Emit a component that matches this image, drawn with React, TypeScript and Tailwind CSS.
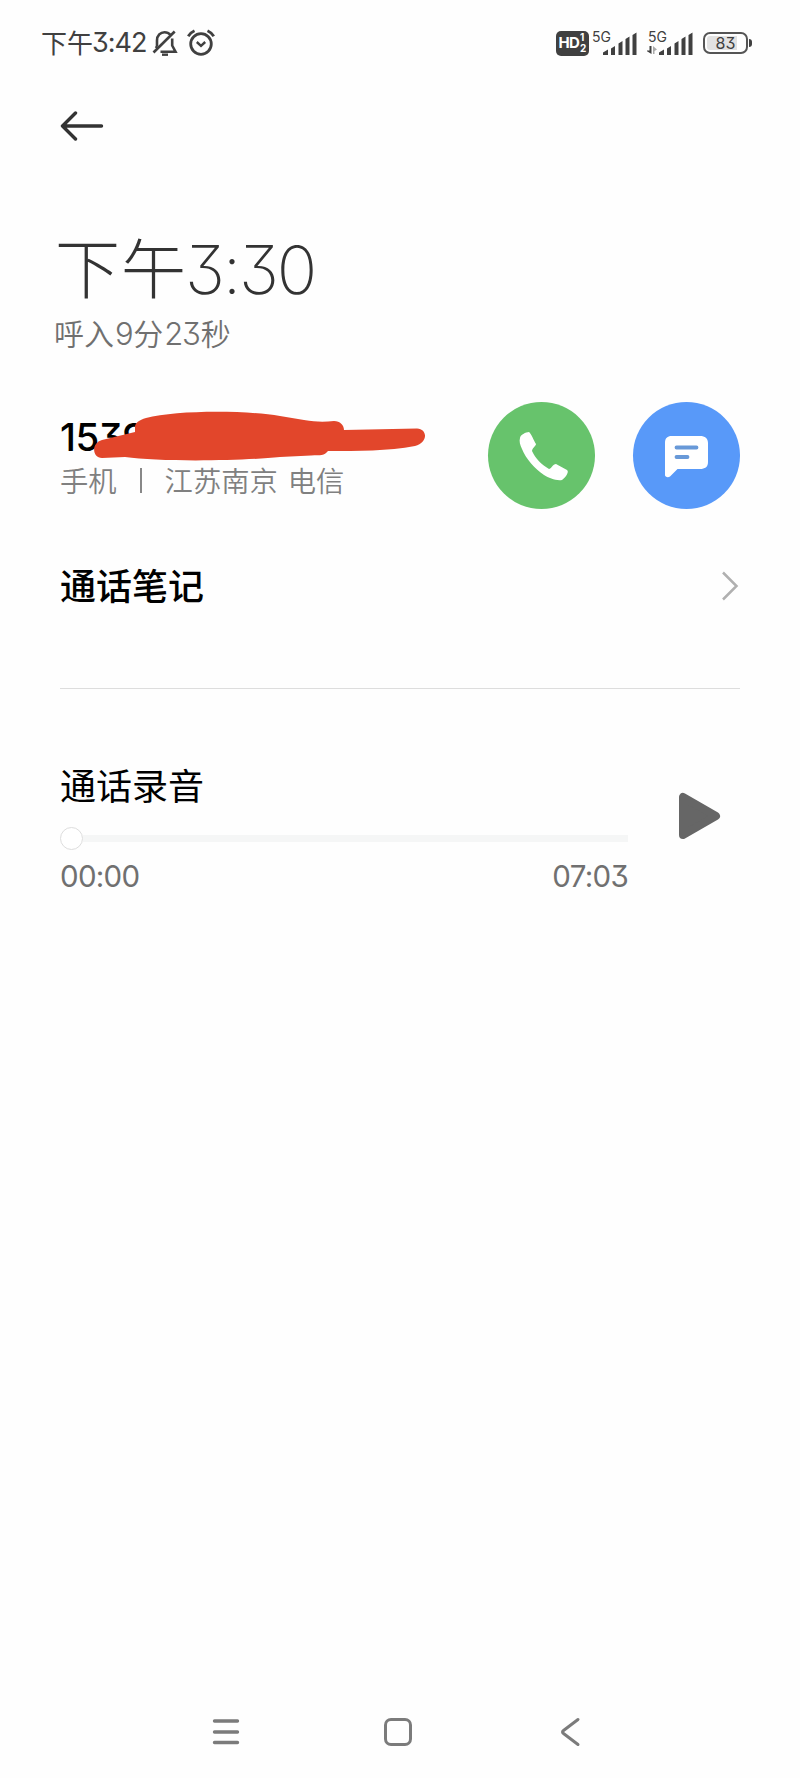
import React from 'react';

const StatusBar = () => {
  return (
    <div className="flex h-[84px] items-center justify-between pl-[41px] pr-[48px] pt-[2px] text-[#404040]">
      <div className="flex items-center">
        <span className="flex items-center whitespace-nowrap text-[26px] leading-[30px]">
          <span className="-mt-[3px]">下午</span>
          <span className="num ml-[-1px] text-[27px] tracking-[-1px]">3:42</span>
        </span>
        <svg className="ml-[6px] h-[28px] w-[26px]" viewBox="0 0 26 28" fill="none" stroke="currentColor" strokeWidth="2.6">
          <path d="M5 17V11.500C5 6.500 8.500 3.200 12.500 3.200C15 3.200 17 4.200 18.300 5.800M20.200 9.500V16.500L23.500 22.700H8.500M5 17L4 19" />
          <path d="M22.700 2.500L1.500 23.500" />
          <path d="M10 25.700H16" strokeWidth="2.400" />
        </svg>
        <svg className="ml-[9px] h-[28px] w-[28px]" viewBox="0 0 28 28" fill="none" stroke="currentColor" strokeWidth="2.8">
          <circle cx="14" cy="15" r="10.300" />
          <path d="M9.800 13L14 16.800L18.200 13" strokeWidth="2.400" />
          <path d="M1.200 7.200C2.800 4.600 4.800 2.900 7.500 1.700M26.800 7.200C25.200 4.600 23.200 2.900 20.500 1.700" />
        </svg>
      </div>

      <div className="flex items-center">
        <div className="flex h-[25px] w-[33px] items-center justify-center gap-[1px] rounded-[5px] bg-[#404040] text-white">
          <span className="num text-[15px] font-bold tracking-[-0.8px]">HD</span>
          <span className="num flex flex-col text-[10px] font-bold leading-[11px]">
            <span>1</span>
            <span>2</span>
          </span>
        </div>
        <Signal />
        <div className="w-[8px]" />
        <Signal data />
        <div className="ml-[10px] flex items-center">
          <div className="flex h-[22px] w-[45px] items-center justify-center rounded-[7px] border-2 border-[#555555] p-[2px]">
            <div className="flex h-full w-full items-center rounded-[3px] bg-gradient-to-r from-[#e2e2e2] from-80% to-white to-80%">
              <span className="num w-full text-center text-[16px] font-normal leading-none">83</span>
            </div>
          </div>
          <div className="ml-[1px] h-[8px] w-[3px] rounded-r-sm bg-[#404040]" />
        </div>
      </div>
    </div>
  );
};

const Signal = ({ data = false }: { data?: boolean }) => {
  return (
    <div className="relative ml-[2px] h-[26px] w-[46px]">
      <span className="num absolute left-[1px] top-0 text-[14px] leading-none">5G</span>
      <svg className="h-full w-full" viewBox="0 0 46 26" fill="currentColor">
        <path d="M12 25V22.500L17 19.500V25ZM20 25V18.500L24 16V25ZM27.500 25V13.500L31.500 11V25ZM34.500 25V9L38.500 6.500V25ZM41.500 25V5L45.500 2.500V25Z" />
        {data && (
          <>
            <path d="M2.500 16H4.500V24L-1 20.500H2.500Z" />
            <path d="M6 24H7.500V21L10 19.500L6 16Z" fill="#aaaaaa" />
          </>
        )}
      </svg>
    </div>
  );
};

const CallHeader = () => {
  return (
    <header>
      <div className="flex h-[84px] items-center pl-[60px]">
        <svg className="h-[30px] w-[44px]" viewBox="0 0 44 30" fill="none" stroke="#333333" strokeWidth="3.4" strokeLinecap="round" strokeLinejoin="round">
          <path d="M15.500 2L2.500 15L15.500 28M2.500 15H41.500" />
        </svg>
      </div>
      <h1 className="mt-[60px] flex h-[84px] items-center whitespace-nowrap pl-[55px] text-[65px] font-light leading-[84px] tracking-[1px] text-[#333333]">
        <span className="-mt-[11px]">下午</span>
        <span className="num ml-[-2px] text-[67px] font-[250] tracking-[-2.2px]">3:30</span>
      </h1>
      <p className="flex h-[44px] items-center whitespace-nowrap pl-[54px] text-[30px] font-[350] leading-[44px] text-[#707070]">
        <span className="-mt-[4px]">呼入</span>
        <span className="num px-[1px] text-[31px] font-light tracking-[-1.3px]">9</span>
        <span className="-mt-[4px]">分</span>
        <span className="num px-[1px] text-[31px] font-light tracking-[-1.3px]">23</span>
        <span className="-mt-[4px]">秒</span>
      </p>
    </header>
  );
};

const Contact = () => {
  return (
    <section className="mt-[46px] flex h-[107px] items-center pl-[60px] pr-[60px]">
      <div className="relative h-full flex-1">
        <div className="num h-[61px] pt-[13px] text-[38.5px] font-medium leading-[44px] tracking-[-0.6px] text-black">1539</div>
        <div className="flex h-[34px] items-center whitespace-nowrap text-[28.300px] font-[350] leading-[34px] text-[#808080]">
          <span>手机</span>
          <span className="mx-[23px] h-[25px] w-[2px] bg-[#888888]" />
          <span>江苏南京</span>
          <span className="ml-[10px]">电信</span>
        </div>
        {/* marker stroke over the number */}
        <svg className="absolute left-[-20px] top-[-2px] h-[110px] w-[400px]" viewBox="0 0 400 110" fill="#e2462b">
          <path d="M62 58C52 58 51 43 62 40L95 32L95 27C95 23 99 20 106 18C136 10 205 10 240 16L264 20C276 22 284 22 294 21C300 21 304 25 304 30L377 28.500C388 29 388 43 375 46C348 51 318 51 288 51C284 56 281 55 271 55.500L240 57C200 61 120 62 85 57Z" />
        </svg>
      </div>
      <div className="flex gap-[38px]">
        <button className="flex h-[107px] w-[107px] items-center justify-center rounded-full bg-[#67c36c]" aria-label="拨打">
          <svg className="h-[107px] w-[107px]" viewBox="0 0 107 107" fill="white">
            <path d="M32 36C32 33 38 30 41 30C43 31 46 39 48 42C48 44 44 46 44 49C47 56 54 63 61 67C63 67 65 62 68 62L79 68C82 70 76 77 74 78C68 79 61 76 56 73C47 67 38 57 34 47C32 43 31 39 32 36Z" />
          </svg>
        </button>
        <button className="flex h-[107px] w-[107px] items-center justify-center rounded-full bg-[#5899f9]" aria-label="短信">
          <svg className="h-[107px] w-[107px]" viewBox="0 0 107 107" fill="white">
            <path d="M38.500 34H67C72 34 75 36.500 75 41V60C75 65 72 67 67 67H44.500L37 74.500C35 76 32 75 32 73V41C32 36 34.500 34 38.500 34Z" />
            <path d="M43.500 45.500H63.500M43.500 55H54.500" stroke="#6899d8" strokeWidth="3.800" strokeLinecap="round" />
          </svg>
        </button>
      </div>
    </section>
  );
};

const Recording = () => {
  return (
    <section className="flex pl-[60px] pr-[60px]">
      <div className="w-[568px]">
        <h2 className="-mt-px h-[49px] text-[36px] font-normal leading-[48px] text-black">通话录音</h2>
        <div className="mt-[17px] flex h-[24px] items-center">
          <div className="h-[23px] w-[23px] rounded-full border border-[#dddddd] bg-white" />
          <div className="h-[7px] flex-1 bg-[#f5f6f6]" />
        </div>
        <div className="num mt-[9px] flex h-[34px] items-center justify-between text-[29.5px] font-[380] tracking-[-0.7px] text-[#707070]">
          <span>00:00</span>
          <span>07:03</span>
        </div>
      </div>
      <button className="ml-[47px] mt-[27px] h-[56px] w-[50px]" aria-label="播放">
        <svg className="h-full w-full" viewBox="0 0 50 56" fill="#666666" stroke="#666666" strokeWidth="8" strokeLinejoin="round">
          <path d="M8 9V47L41 28Z" />
        </svg>
      </button>
    </section>
  );
};

const NavBar = () => {
  return (
    <nav className="mt-auto flex h-[92px] items-center pl-[212px]">
      <svg className="h-[30px] w-[28px]" viewBox="0 0 28 30" fill="none" stroke="#7b7b7b" strokeWidth="3.400" strokeLinecap="round">
        <path d="M2.500 4H25.500M2.500 15H25.500M2.500 25.500H25.500" />
      </svg>
      <div className="ml-[144px] h-[28px] w-[28px] rounded-[7px] border-[3px] border-[#7b7b7b]" />
      <svg className="ml-[147px] h-[30px] w-[22px]" viewBox="0 0 22 30" fill="none" stroke="#7b7b7b" strokeWidth="3" strokeLinecap="round">
        <path d="M19 2.500L4.500 13.500Q2.500 15 4.500 16.500L19 27.500" />
      </svg>
    </nav>
  );
};

const App = () => {
  return (
    <div className="flex h-[1778px] w-[800px] flex-col overflow-hidden bg-[#fefefe] font-['Noto_Sans_CJK_SC',sans-serif] [&_.num]:font-['Inter','Noto_Sans_CJK_SC',sans-serif] [&_.num]:[font-feature-settings:'cv09']">
      <StatusBar />
      <CallHeader />
      <Contact />
      <section className="mt-[50px] flex h-[54px] items-center justify-between pl-[60px] pr-[60px]">
        <h2 className="-mt-[5px] text-[36px] font-medium leading-[54px] text-black">通话笔记</h2>
        <svg className="h-[32px] w-[18px]" viewBox="0 0 18 32" fill="none" stroke="#b0b0b0" strokeWidth="2.500">
          <path d="M1 2.500L14.500 16L1 29.500" />
        </svg>
      </section>
      <hr className="mx-[60px] mb-[72px] mt-[75px] border-[#dddddd]" />
      <Recording />
      <NavBar />
    </div>
  );
};

export default App;
